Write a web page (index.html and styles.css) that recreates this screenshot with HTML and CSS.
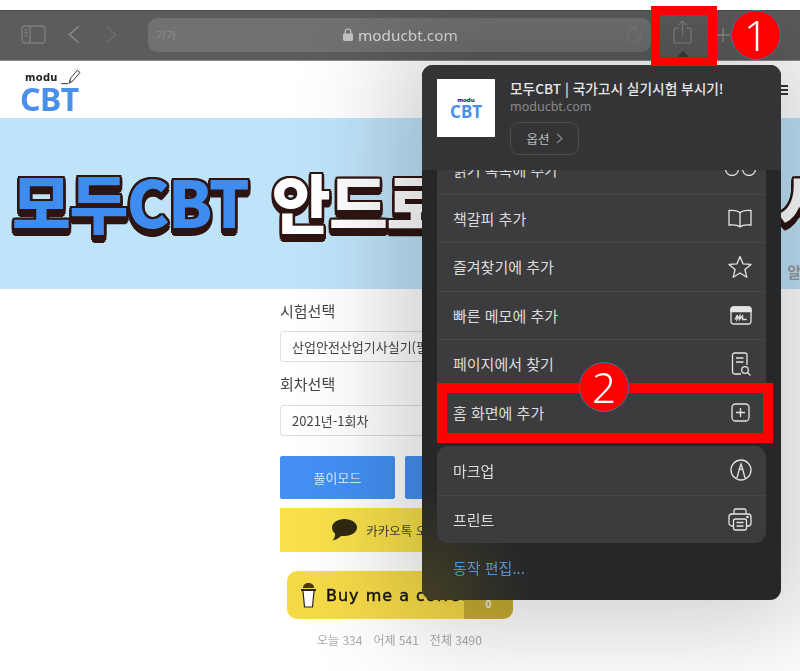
FILE: index.html
```html
<!DOCTYPE html>
<html lang="ko">
<head>
<meta charset="utf-8">
<title>모두CBT</title>
<link rel="stylesheet" href="styles.css">
</head>
<body>
<div class="shot">
  <div class="top-gap"></div>
  <header class="toolbar">
    <svg class="tb-sidebar" width="25" height="19" viewBox="0 0 25 19" fill="none" stroke="#7d7d7d" stroke-width="1.4"><rect x="1" y="1" width="23" height="17" rx="3"/><path d="M9 1v17M3.500 5H6.500M3.500 8H6.500M3.500 11H6.500"/></svg>
    <svg class="tb-back" width="12" height="20" viewBox="0 0 12 20" fill="none" stroke="#8c8c8c" stroke-width="1.6"><path d="M10.500 1.500 1.500 9.500l9 8"/></svg>
    <svg class="tb-fwd" width="12" height="20" viewBox="0 0 12 20" fill="none" stroke="#6e6e6e" stroke-width="1.6"><path d="M1.500 1.500l9 8-9 8"/></svg>
    <div class="address">
      <span class="aa">가가</span>
      <span class="url">
        <svg width="10" height="13" viewBox="0 0 10 13"><path d="M2.200 6V3.800a2.800 2.800 0 0 1 5.600 0V6" fill="none" stroke="#c4c4c4" stroke-width="1.200"/><rect y="5.500" width="10" height="7.500" rx="1.400" fill="#c4c4c4"/></svg>
        moducbt.com
      </span>
      <svg class="reload" width="16" height="18" viewBox="0 0 16 18" fill="none" stroke="#7b7b7b" stroke-width="1.400"><path d="M9.500 2.500A6.800 6.800 0 1 0 14.800 9"/><path d="M7.500 0l3 2.600-3 2.600"/></svg>
    </div>
    <svg class="tb-share" width="19" height="24" viewBox="0 0 20 25" fill="none" stroke="#7e7e7e" stroke-width="1.400"><path d="M6 8.500H3a2 2 0 0 0-2 2V22a2 2 0 0 0 2 2h14a2 2 0 0 0 2-2V10.500a2 2 0 0 0-2-2h-3M10 16V1M5.800 5 10 1l4.200 4"/></svg>
    <svg class="tb-plus" width="14" height="14" viewBox="0 0 14 14" stroke="#8a8a8a" stroke-width="1.400"><path d="M7 0v14M0 7h14"/></svg>
  </header>

  <div class="page">
    <div class="site-head">
      <div class="logo">
        <div class="logo-top">
          <span class="logo-modu">modu</span>
          <svg width="20" height="17" viewBox="0 0 22 19" fill="none" stroke="#222" stroke-width="1"><path d="M0 17.500H8M9 17l1.500-5.500L18 2.500l3 2.500-7.500 9z"/><path d="M11 15l-1-1"/></svg>
        </div>
        <div class="logo-cbt">CBT</div>
      </div>
      <div class="burger"><i></i><i></i><i></i></div>
    </div>

    <div class="hero">
      <div class="hero-title"><span class="hero-blue">모두CBT</span> <span class="hero-white">안드로이드 어플 출시</span></div>
      <span class="hero-side">알</span>
    </div>

    <main class="form">
      <label class="f-label">시험선택</label>
      <div class="f-select">산업안전산업기사실기(필답형)</div>
      <label class="f-label">회차선택</label>
      <div class="f-select">2021년-1회차</div>
      <div class="f-buttons">
        <div class="btn">풀이모드</div>
        <div class="btn">시험모드</div>
      </div>
      <div class="kakao">
        <svg width="25" height="22" viewBox="0 0 25 22"><path d="M12.500 0C19.500 0 25 3.800 25 8.500S19.500 17 12.500 17c-1 0-2-.1-3-.2C7 19 4 21 .5 21.500 2 20 3 18 3.200 14.800 1.200 13.300 0 11 0 8.500 0 3.800 5.500 0 12.500 0Z" fill="#2f2a10"/></svg>
        <span>카카오톡 오픈채팅</span>
      </div>
      <div class="coffee">
        <svg width="17" height="26" viewBox="0 0 17 26"><path d="M3 9 4.500 25h8L14 9" fill="#fff" stroke="#2a2416" stroke-width="1.200"/><path d="M1 8h15" stroke="#2a2416" stroke-width="2"/><path d="M3 6C3 2.500 5.500 1 8.500 1S14 2.500 14 6z" fill="#4a3618"/></svg>
        <span class="coffee-text">Buy me a coffee</span>
        <span class="coffee-count">0</span>
      </div>
      <div class="counter"><span>오늘 334</span><span>어제 541</span><span>전체 3490</span></div>
    </main>
  </div>

  <aside class="popover">
    <div class="pop-head">
      <div class="thumb">
        <div class="thumb-modu">modu</div>
        <div class="thumb-cbt">CBT</div>
      </div>
      <div class="pop-info">
        <div class="pop-title">모두CBT | 국가고시 실기시험 부시기!</div>
        <div class="pop-url">moducbt.com</div>
        <div class="pop-opt">옵션 <svg width="7" height="11" viewBox="0 0 7 11" fill="none" stroke="#8c8c8c" stroke-width="1.200"><path d="M1 1l5 4.500-5 4.500"/></svg></div>
      </div>
    </div>
    <div class="pop-scroll">
      <ul class="group group-first">
        <li class="row"><span>읽기 목록에 추가</span>
          <svg class="icon-glasses" width="33" height="14" viewBox="0 0 33 14" fill="none" stroke="#e4e4e4" stroke-width="1.300"><circle cx="8" cy="7" r="6.500"/><circle cx="25" cy="7" r="6.500"/><path d="M14.500 6h4"/></svg></li>
        <li class="row"><span>책갈피 추가</span>
          <svg width="24" height="19" viewBox="0 0 24 19" fill="none" stroke="#e4e4e4" stroke-width="1.300"><path d="M12 4C10 1.800 6 1 1 1.500v14.500c5-.5 9 .2 11 2 2-1.800 6-2.500 11-2V1.500C18 1 14 1.800 12 4Zm0 0v14"/></svg></li>
        <li class="row"><span>즐겨찾기에 추가</span>
          <svg width="24" height="23" viewBox="0 0 24 23" fill="none" stroke="#e4e4e4" stroke-width="1.300"><path d="M12 1.500l3 7.300 8 .6-6.100 5.100 1.900 7.700L12 18l-6.800 4.200 1.900-7.700L1 9.400l8-.6z" stroke-linejoin="round"/></svg></li>
        <li class="row"><span>빠른 메모에 추가</span>
          <svg width="22" height="19" viewBox="0 0 22 19" fill="none" stroke="#e4e4e4" stroke-width="1.300"><rect x="1" y="1" width="20" height="17" rx="2.500"/><path d="M1 5.500V3.500a2.500 2.500 0 0 1 2.500-2.500h15A2.500 2.500 0 0 1 21 3.500v2z" fill="#e4e4e4"/><path d="M5 13.500l2.500-4.500-.5 4.500 3-4-.5 4 3-3.500.2 3.500h4"/></svg></li>
        <li class="row"><span>페이지에서 찾기</span>
          <svg width="21" height="24" viewBox="0 0 21 24" fill="none" stroke="#e4e4e4" stroke-width="1.300"><path d="M10 22H3.500A2 2 0 0 1 1.500 20V3a2 2 0 0 1 2-2h10.500a2 2 0 0 1 2 2v10M5 6h7.500M5 10h7.500"/><circle cx="14" cy="18" r="3.300"/><path d="M16.500 20.500l3 3"/></svg></li>
        <li class="row"><span>홈 화면에 추가</span>
          <svg class="icon-plus" width="19" height="19" viewBox="0 0 19 19" fill="none" stroke="#e4e4e4" stroke-width="1.300"><rect x="1" y="1" width="17" height="17" rx="3.500"/><path d="M9.500 5v9M5 9.500h9"/></svg></li>
      </ul>
      <ul class="group">
        <li class="row"><span>마크업</span>
          <svg width="22" height="22" viewBox="0 0 22 22" fill="none" stroke="#e4e4e4" stroke-width="1.300"><circle cx="11" cy="11" r="10"/><path d="M7 19 9.500 9.500 11 5l1.500 4.500L15 19M9.500 9.500c1 1.200 2 1.200 3 0"/></svg></li>
        <li class="row"><span>프린트</span>
          <svg width="24" height="23" viewBox="0 0 24 23" fill="none" stroke="#e4e4e4" stroke-width="1.300"><path d="M6 6V3a2 2 0 0 1 2-2h8a2 2 0 0 1 2 2v3"/><path d="M5.500 18H4a3 3 0 0 1-3-3V9a3 3 0 0 1 3-3h16a3 3 0 0 1 3 3v6a3 3 0 0 1-3 3h-1.500"/><rect x="5.500" y="11" width="13" height="11" rx="2"/><path d="M8.500 14.500h7M8.500 18h7"/><circle cx="19.500" cy="9" r=".7" fill="#e4e4e4"/></svg></li>
      </ul>
      <div class="edit">동작 편집...</div>
    </div>
  </aside>

  <div class="mark mark-share"></div>
  <div class="mark mark-home"></div>
  <div class="badge badge-1">1</div>
  <div class="badge badge-2">2</div>
</div>
</body>
</html>
```

FILE: styles.css
```css
* { box-sizing: border-box; }
html, body { margin: 0; padding: 0; background: #fff; }
body { font-family: "Noto Sans CJK KR", "Noto Sans", sans-serif; }
ul { margin: 0; padding: 0; list-style: none; }

.shot { position: relative; width: 800px; height: 671px; overflow: hidden; background: #fff; }
.top-gap { position: relative; z-index: 2; height: 10px; background: #fff; }

.toolbar {
  position: relative;
  height: 51px;
  background: #5c5c5c;
  border-top: 1px solid #4c4c4c;
  border-bottom: 1px solid #8a8a8a;
  display: flex;
  align-items: center;
  padding: 0 0 2px 21px;
  filter: blur(.35px);
}
.tb-sidebar { margin-right: 22px; }
.tb-back { margin-right: 25px; }
.tb-fwd { margin-right: 31px; }
.address {
  width: 503px;
  height: 34px;
  border-radius: 9px;
  background: #717171;
  display: flex;
  align-items: center;
  padding: 0 8px;
  position: relative;
}
.aa { font-size: 11px; color: #8b8b8b; width: 24px; }
.url { display: flex; align-items: center; gap: 5px; margin-left: 163px; font-family: "Noto Sans", sans-serif; font-size: 15.300px; color: #d8d8d8; }
.reload { margin-left: auto; margin-right: 1px; }
.tb-share { margin-left: 22px; margin-top: -5px; }
.tb-plus { margin-left: 24px; }

.page { filter: blur(.35px); }
.site-head { height: 56px; position: relative; padding: 5px 0 0 20px; }
.logo-top { display: flex; align-items: flex-end; gap: 3px; margin-left: 5px; height: 19px; }
.logo-modu { font-family: "DejaVu Sans", sans-serif; font-weight: 700; font-size: 10px; line-height: 14px; color: #222; letter-spacing: .3px; }
.logo-cbt { font-family: "Noto Sans", sans-serif; font-weight: 700; font-size: 32px; line-height: 28px; color: #4a90e8; letter-spacing: -.5px; }
.burger { position: absolute; right: 12px; top: 24px; width: 8px; display: flex; flex-direction: column; gap: 2px; }
.burger i { display: block; height: 2px; background: #333; }

.hero {
  position: relative;
  height: 171px;
  margin-top: 1px;
  background: #bfe4fa;
  overflow: hidden;
  padding: 49px 0 0 12px;
}
.hero-title {
  font-family: "Noto Sans CJK KR", sans-serif;
  font-weight: 900;
  font-size: 64px;
  line-height: 66px;
  white-space: nowrap;
  letter-spacing: -1.500px;
  word-spacing: 7px;
}
.hero-blue, .hero-white {
  text-shadow:
    2.500px 0 0 #2e1512, -2.500px 0 0 #2e1512, 0 -2.500px 0 #2e1512,
    1.800px -1.800px 0 #2e1512, -1.800px -1.800px 0 #2e1512,
    2.500px 2px 0 #2e1512, -2.500px 2px 0 #2e1512,
    2.500px 5px 0 #2e1512, -2.500px 5px 0 #2e1512,
    1.500px 7px 0 #2e1512, -1.500px 7px 0 #2e1512, 0 7.500px 0 #2e1512;
}
.hero-blue { color: #3f8cf0; }
.hero-white { color: #fff; }
.hero-side { position: absolute; right: -1px; top: 143px; font-size: 15px; font-weight: 700; color: #999; }

.form { width: 240px; margin-left: 280px; padding-top: 10px; }
.f-label { display: block; font-size: 15px; line-height: 22px; color: #444; height: 32px; padding-top: 1px; }
.f-select {
  height: 31px;
  border: 1px solid #ddd;
  border-radius: 3px;
  background: #fff;
  margin-bottom: 13px;
  padding-left: 11px;
  font-size: 13px;
  line-height: 29px;
  color: #444;
  white-space: nowrap;
  overflow: hidden;
}
.f-select + .f-label { height: 30px; padding-top: 0; line-height: 20px; margin-top: -1px; margin-bottom: 1px; }
.f-buttons { display: flex; gap: 10px; margin-top: 20px; }
.btn { flex: 1; height: 43px; border-radius: 2px; background: #4490f4; color: #d8e8fb; font-size: 13px; line-height: 43px; text-align: center; }
.kakao { height: 44px; margin-top: 9px; padding-right: 6px; background: #f8e14b; display: flex; align-items: center; justify-content: center; gap: 9px; font-size: 12.500px; color: #444; }
.coffee {
  height: 48px;
  width: 226px;
  margin: 19px 0 0 7px;
  border-radius: 10px;
  background: #f5da48;
  display: flex;
  align-items: center;
  padding-left: 13px;
  overflow: hidden;
}
.coffee-text { margin-left: 9px; font-family: "DejaVu Sans", sans-serif; font-weight: 400; -webkit-text-stroke: .4px #111; font-size: 16px; letter-spacing: 1px; color: #111; white-space: nowrap; width: 138px; overflow: hidden; }
.coffee-count { align-self: stretch; flex: 1; background: #c8ad32; color: #eee; font-size: 10px; font-weight: 700; text-align: center; padding-top: 26px; line-height: 14px; }
.counter { display: flex; gap: 11px; margin: 12px 0 0 37px; font-size: 12px; line-height: 18px; color: #aaa; white-space: nowrap; }

.popover {
  position: absolute;
  z-index: 1;
  left: 422px;
  top: 65px;
  width: 359px;
  height: 535px;
  border-radius: 11px;
  background: radial-gradient(circle at 0 100%, rgba(120,105,25,.35), transparent 110px), #262729;
  box-shadow: 0 0 100px 30px rgba(0,0,0,.19);
  display: flex;
  flex-direction: column;
  filter: blur(.35px);
}
.popover::before {
  content: "";
  position: absolute;
  left: 254px;
  top: -14px;
  border: 7px solid transparent;
  border-top-width: 0;
  border-bottom: 7px solid #333;
}
.pop-head {
  flex: none;
  position: relative;
  z-index: 1;
  height: 105px;
  border-radius: 11px 11px 0 0;
  background: #343437;
  display: flex;
  padding: 14px 0 0 15px;
  gap: 15px;
}
.thumb { width: 58px; height: 58px; background: #fff; text-align: center; padding-top: 18px; }
.thumb-modu { font-family: "DejaVu Sans", sans-serif; font-weight: 700; font-size: 5.500px; line-height: 6px; color: #222; }
.thumb-cbt { font-family: "Noto Sans", sans-serif; font-weight: 700; font-size: 17px; line-height: 17px; color: #4a90e8; }
.pop-info { display: flex; flex-direction: column; align-items: flex-start; }
.pop-title { font-size: 13.700px; font-weight: 500; line-height: 18px; color: #e8e8e8; white-space: nowrap; }
.pop-url { font-family: "Noto Sans", sans-serif; font-size: 12.500px; line-height: 18px; padding-top: 1px; color: #8a8a8a; }
.pop-opt {
  margin-top: 6px;
  width: 69px;
  height: 33px;
  border: 1px solid #4c4c4f;
  border-radius: 9px;
  font-size: 12.500px;
  color: #bdbdbd;
  display: flex;
  align-items: center;
  justify-content: center;
  gap: 6px;
}
.pop-scroll { flex: 1; overflow: hidden; padding: 0 15px; }
.group { background: #3c3c3f; border-radius: 11px; margin-bottom: 10px; }
.group-first { margin-top: -25px; border-radius: 0; }
.row {
  height: 48.500px;
  display: flex;
  align-items: center;
  justify-content: space-between;
  padding: 0 14px 0 16px;
  font-size: 15px;
  color: #dcdcdc;
  border-top: 1px solid #474749;
}
.row:first-child { border-top: 0; }
.row svg { flex: none; }
.icon-glasses { margin-right: -5px; }
.icon-plus { margin-right: 2px; }
.edit { padding: 2px 0 0 16px; font-size: 15px; line-height: 26px; color: #5a8fd6; }

.mark { position: absolute; z-index: 3; border: solid #f00; }
.mark-share { left: 651px; top: 6px; width: 66px; height: 60px; border-width: 9px; }
.mark-home { left: 437px; top: 383px; width: 336px; height: 60px; border-width: 10px; }
.badge {
  position: absolute;
  z-index: 4;
  width: 50px;
  height: 50px;
  border-radius: 50%;
  background: #f00;
  border: 1px solid #41719c;
  color: #fff;
  font-family: "Noto Sans", sans-serif;
  font-weight: 300;
  font-size: 42px;
  line-height: 47px;
  text-align: center;
}
.badge-1 { left: 731px; top: 10px; }
.badge-2 { left: 579px; top: 362px; }
```
